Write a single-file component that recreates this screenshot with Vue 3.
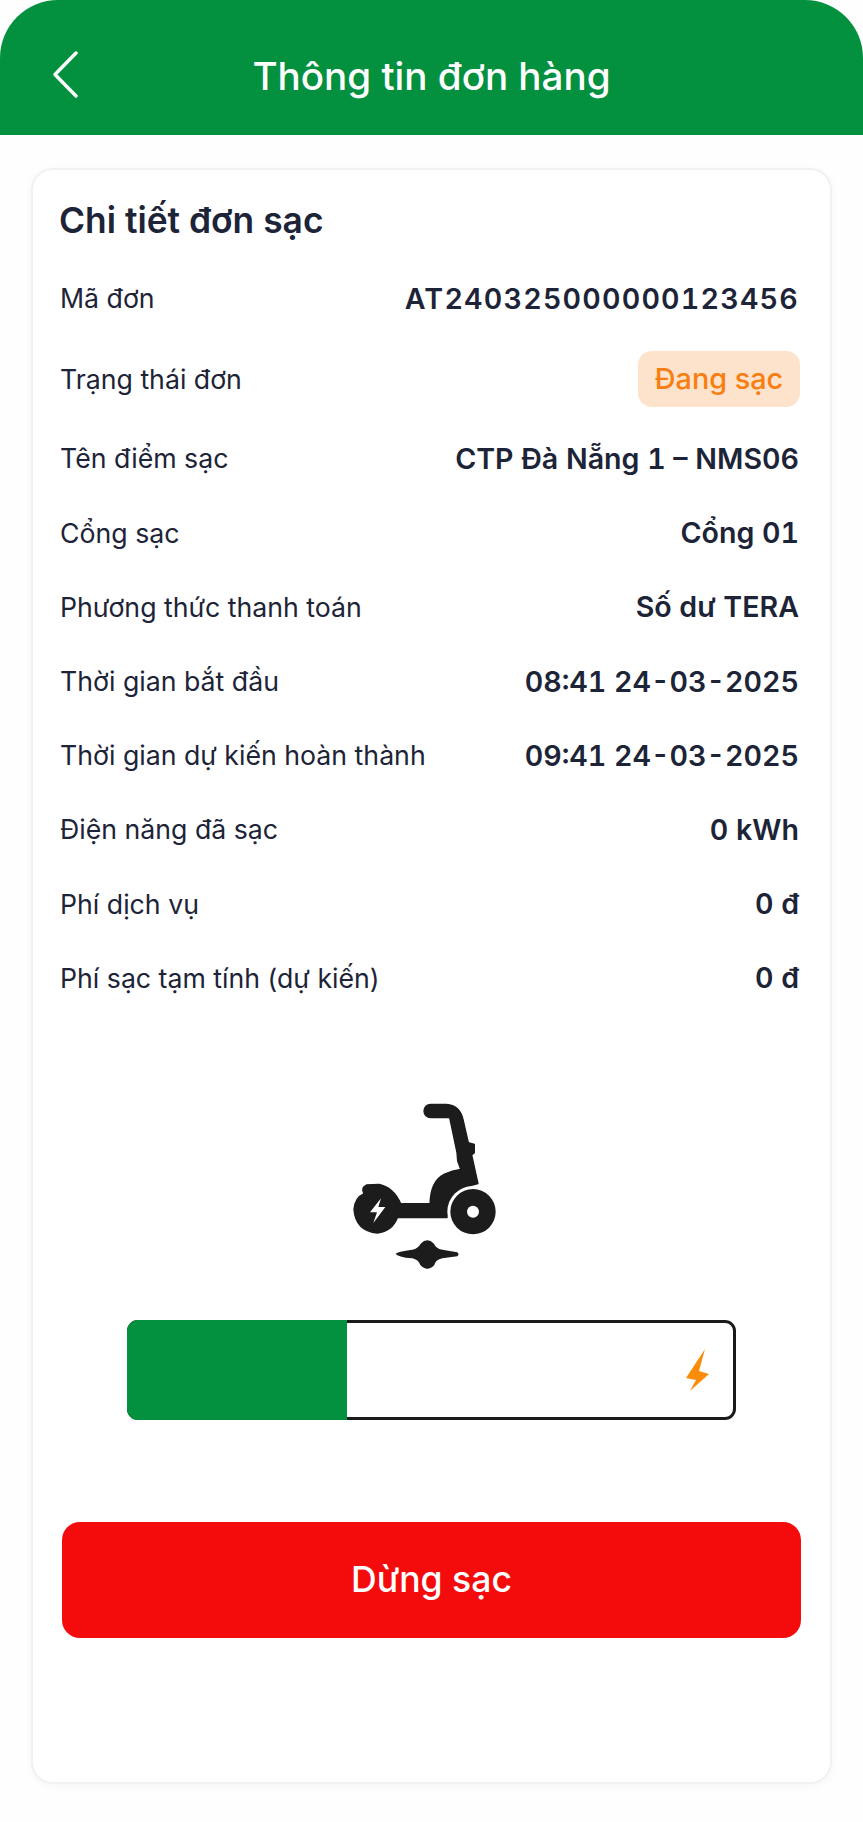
<script setup>
const rows = [
  { label: "Mã đơn", value: "AT240325000000123456", code: true },
  { label: "Trạng thái đơn", badge: "Đang sạc" },
  { label: "Tên điểm sạc", value: "CTP Đà Nẵng 1 – NMS06" },
  { label: "Cổng sạc", value: "Cổng 01" },
  { label: "Phương thức thanh toán", value: "Số dư TERA" },
  { label: "Thời gian bắt đầu", value: "08:41 24-03-2025" },
  { label: "Thời gian dự kiến hoàn thành", value: "09:41 24-03-2025" },
  { label: "Điện năng đã sạc", value: "0 kWh" },
  { label: "Phí dịch vụ", value: "0 đ" },
  { label: "Phí sạc tạm tính (dự kiến)", value: "0 đ" }
];
const progress = 36.5;
</script>

<template>
  <div class="page">
    <header class="header">
      <button class="back" aria-label="Quay lại">
        <svg width="26" height="47" viewBox="0 0 26 47" fill="none">
          <path d="M24 2 L3 23.5 L24 45" stroke="#fff" stroke-width="3.4" stroke-linecap="round" stroke-linejoin="round" />
        </svg>
      </button>
      <h1 class="title">Thông tin đơn hàng</h1>
      <span></span>
    </header>

    <main class="content">
      <section class="card">
        <h2 class="card-title">Chi tiết đơn sạc</h2>

        <div class="rows">
          <div v-for="row in rows" :key="row.label" class="row" :class="{ 'row-badge': row.badge }">
            <span class="label">{{ row.label }}</span>
            <span v-if="row.badge" class="badge">{{ row.badge }}</span>
            <span v-else class="value" :class="{ 'value-code': row.code }">{{ row.value }}</span>
          </div>
        </div>

        <svg class="scooter" width="200" height="200" viewBox="0 0 600 600">
          <path fill="#1c1c1c" stroke="#1c1c1c" stroke-width="4" stroke-linejoin="round" d="M305 70 L352 70 Q392 72 402 115 L418 185 L436 190 L436 215 L428 222 L447 308 Q395 318 372 352 Q358 375 354 410 L205 410 Q190 450 145 456 Q80 450 75 385 Q78 350 105 338 Q95 320 112 312 L150 310 Q195 320 215 368 L303 368 Q305 300 345 280 Q370 268 395 265 L386 240 L384 215 L362 110 L305 110 A20 20 0 0 1 305 70 Z" />
          <circle cx="432" cy="392" r="77" fill="#fff" />
          <circle cx="432" cy="392" r="68" fill="#1c1c1c" />
          <circle cx="432" cy="392" r="18" fill="#fff" />
          <path fill="#fff" d="M156 352 L123 394 L144 394 L133 426 L169 378 L148 378 Z" />
          <path fill="#1c1c1c" d="M200 518 Q205 512 250 506 Q268 502 275 488 Q295 468 315 488 Q320 502 340 506 L385 514 Q392 520 385 526 L340 532 Q320 536 316 552 Q295 575 274 552 Q268 536 250 532 Q205 528 200 518 Z" />
        </svg>

        <div class="battery">
          <div class="battery-fill" :style="{ width: progress + '%' }"></div>
          <svg class="bolt" width="23" height="42" viewBox="0 0 23 42">
            <path fill="#fb8c0a" d="M19 0 L0 29 L10 31 L4 42 L23 25 L13 22 Z" />
          </svg>
        </div>

        <button class="stop">Dừng sạc</button>
      </section>
    </main>
  </div>
</template>

<style scoped>
.page {
  width: 863px;
  height: 1822px;
  background: #fefefe;
  font-family: "Inter", "Noto Sans", sans-serif;
  display: flex;
  flex-direction: column;
}

.header {
  height: 135px;
  background: #03913f;
  border-radius: 58px 58px 0 0;
  display: grid;
  grid-template-columns: 1fr auto 1fr;
  align-items: center;
  padding: 14px 0 0 52px;
  box-sizing: border-box;
}

.back {
  justify-self: start;
  background: none;
  border: 0;
  padding: 0;
  display: flex;
}

.title {
  margin: 2px 0 0 -52px;
  color: #fff;
  font-size: 38.6px;
  font-weight: 500;
}

.content {
  padding: 33px 31px 0 31px;
}

.card {
  height: 1616px;
  box-sizing: border-box;
  border: 2px solid #f1f1f3;
  border-radius: 22px;
  background: #fff;
  box-shadow: 0 2px 8px rgba(20, 30, 50, 0.04);
  padding: 0 31px 0 26px;
  display: flex;
  flex-direction: column;
}

.card-title {
  margin: 29px 0 0;
  height: 44px;
  line-height: 44px;
  font-size: 35.4px;
  font-weight: 600;
  color: #1d2437;
}

.rows {
  margin-top: 18px;
  padding-left: 1px;
}

.row {
  height: 74.2px;
  display: flex;
  justify-content: space-between;
  align-items: center;
}

.row-badge {
  margin: 7px 0 5px;
}

.label {
  font-size: 26.7px;
  color: #1d2437;
}

.value {
  font-size: 28.6px;
  font-weight: 600;
  font-variant-numeric: tabular-nums;
  color: #1d2437;
}

.value-code {
  letter-spacing: 1.2px;
}

.badge {
  width: 162px;
  height: 56px;
  line-height: 56px;
  text-align: center;
  border-radius: 14px;
  background: #fde3cc;
  color: #f97d10;
  font-size: 28.8px;
  font-weight: 500;
  margin-right: -1px;
}

.scooter {
  align-self: center;
  margin-top: 66px;
  flex: none;
}

.battery {
  position: relative;
  margin: 39px 63px 0 68px;
  height: 100px;
  box-sizing: border-box;
  border: 3px solid #1a1a1a;
  border-radius: 11px;
  background: #fff;
}

.battery-fill {
  position: absolute;
  left: -3px;
  top: -3px;
  bottom: -3px;
  background: #03913f;
  border-radius: 11px 0 0 11px;
}

.bolt {
  position: absolute;
  right: 24px;
  top: 26px;
}

.stop {
  margin: 102px -2px 0 3px;
  height: 116px;
  border: 0;
  border-radius: 18px;
  background: #f40c0c;
  color: #fff;
  font-family: inherit;
  font-size: 35.6px;
  font-weight: 500;
  flex: none;
}
</style>
